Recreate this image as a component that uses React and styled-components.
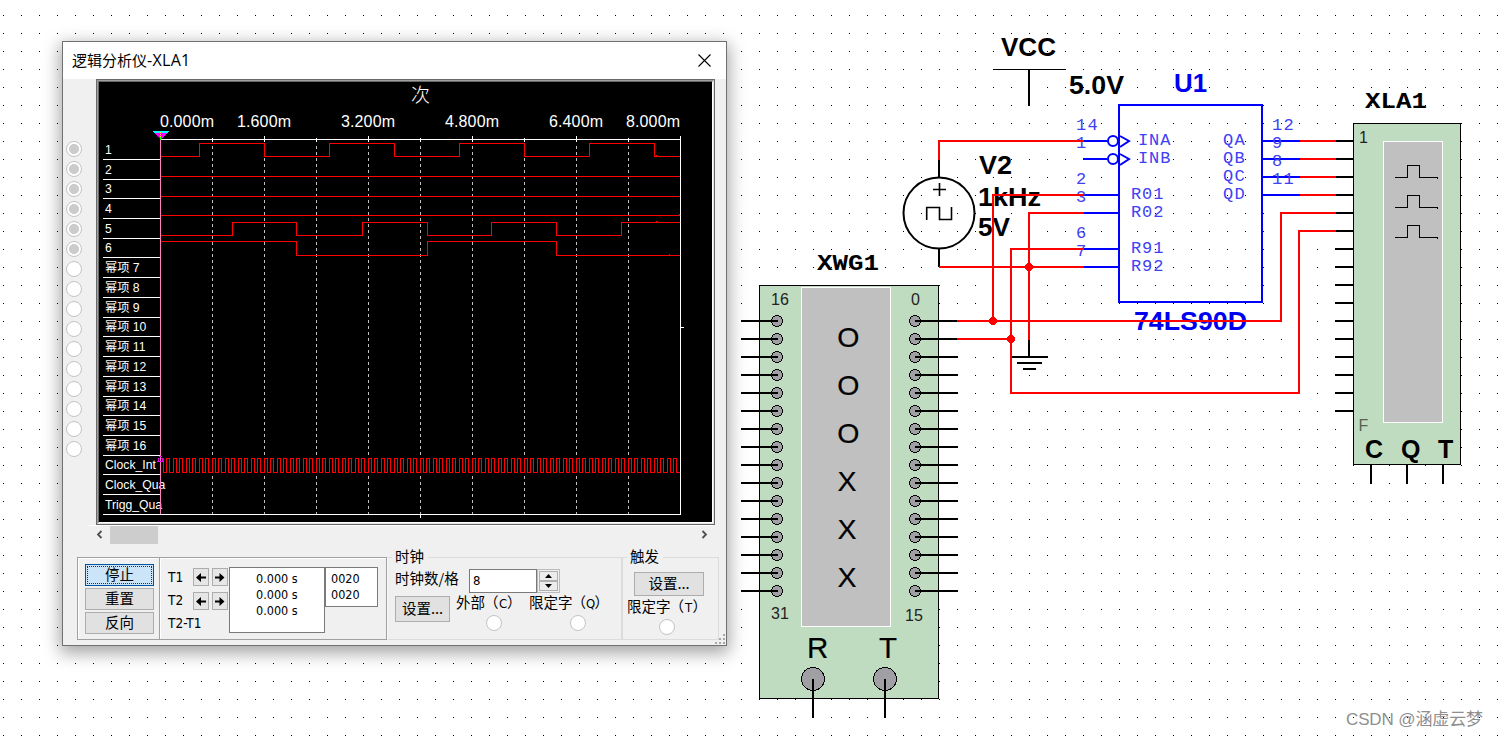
import styled, { createGlobalStyle } from "styled-components";

const GlobalStyle = createGlobalStyle`
  body {
    margin: 0;
    overflow: hidden;
    background-color: #fff;
  }
`;

const uiFont = `"DejaVu Sans Condensed", "Noto Sans", "Noto Sans CJK SC", sans-serif`;
const cjkFont = `"Noto Sans CJK SC", sans-serif`;

const Page = styled.div`
  position: relative;
  width: 1499px;
  height: 737px;
  overflow: hidden;
  background-color: #fff;
  font-family: ${cjkFont};
`;

const Schematic = styled.svg`
  display: block;
  width: 1499px;
  height: 737px;
`;

const Label = styled.text`
  font-family: "Liberation Sans", Arial, sans-serif;
  font-size: ${(p) => p.$size || 25}px;
  font-weight: ${(p) => (p.$thin ? 400 : 700)};
  fill: ${(p) => p.$color || "#000"};
  stroke: ${(p) => (p.$heavy ? "#000" : "none")};
  stroke-width: 0.2px;
`;

const SlabLabel = styled.text`
  font-family: "Liberation Mono", "Courier New", monospace;
  font-size: 22px;
  font-weight: 700;
`;

const PinLabel = styled.text`
  font-family: "Liberation Mono", "Courier New", monospace;
  font-size: 17px;
  fill: #4040f4;
`;

const Watermark = styled.text`
  font-family: "Liberation Sans", "Noto Sans CJK SC", sans-serif;
  font-size: 17px;
  fill: #8f8f8f;
`;

// the analyzer floats over the schematic
const Window = styled.div`
  position: absolute;
  left: 62px;
  top: 41px;
  box-sizing: border-box;
  width: 665px;
  height: 605px;
  border: 1px solid #707070;
  background-color: #f0f0f0;
  box-shadow: 0 5px 16px 2px rgba(0, 0, 0, 0.36);
`;

const TitleBar = styled.div`
  display: flex;
  align-items: center;
  justify-content: space-between;
  height: 37px;
  padding: 0 15px 0 9px;
  background-color: #fff;
`;

const Title = styled.div`
  margin-top: -2px;
  font-family: "Open Sans", "Noto Sans CJK SC", sans-serif;
  font-size: 15px;
  line-height: 20px;
  white-space: nowrap;
  color: #000;
`;

const TitleLatin = styled.span`
  font-size: 16px;
  letter-spacing: 0.3px;
`;

const Upper = styled.div`
  display: flex;
`;

const RadioColumn = styled.div`
  display: flex;
  flex-direction: column;
  gap: 4px;
  width: 30px;
  padding: 62px 0 0 3px;
`;

const Radio = styled.span`
  display: block;
  box-sizing: border-box;
  width: 16px;
  height: 16px;
  border: 1px solid #c3c3c3;
  border-radius: 50%;
  background-color: #fff;
  background-image: ${(p) =>
    p.$on ? "radial-gradient(circle, #ccc 4.7px, #fff 5.3px)" : "none"};
`;

const Frame = styled.div`
  box-sizing: border-box;
  width: 619px;
  height: 446px;
  border: 1px solid #696969;
`;

const FrameBevel = styled.div`
  border: 1px solid;
  border-color: #a0a0a0 #e3e3e3 #e3e3e3 #a0a0a0;
`;

const FrameInner = styled.div`
  border: 1px solid;
  border-color: #696969 #fff #fff #696969;
`;

const Chart = styled.svg`
  display: block;
  overflow: visible;
  width: 613px;
  height: 440px;
  background-color: #000;
`;

const AxisLabel = styled.text`
  font-family: "Liberation Sans", Arial, sans-serif;
  font-size: 16px;
  fill: #fff;
`;

const ChartTitle = styled.text`
  font-family: ${cjkFont};
  font-size: 19px;
  font-weight: 300;
  fill: #fff;
`;

const RowLabel = styled.text`
  font-family: "Liberation Sans", "Noto Sans CJK SC", sans-serif;
  font-size: 12.2px;
  fill: #fff;
`;

const ScrollBar = styled.div`
  display: flex;
  align-items: flex-start;
  box-sizing: border-box;
  width: 624px;
  height: 20px;
  margin-left: 26px;
  border-top: 1px solid #fff;
`;

const ScrollArrow = styled.svg`
  flex-shrink: 0;
  width: 7px;
  height: 9px;
  margin: 4px 7px 0 7px;
`;

const ScrollThumb = styled.div`
  flex-shrink: 0;
  width: 48px;
  height: 18px;
  margin-right: 536px;
  background-color: #cdcdcd;
`;

const Bottom = styled.div`
  display: flex;
  height: 83px;
  margin: 12px 0 0 14px;
`;

const Panel = styled.div`
  box-sizing: border-box;
  width: ${(p) => p.$width}px;
  height: 83px;
  border: 1px solid #a0a0a0;
  border-right-width: ${(p) => (p.$joined ? 0 : 1)}px;
  box-shadow: inset 1px 1px 0 #fff;
`;

const ButtonPanel = styled(Panel)`
  display: flex;
  flex-direction: column;
  gap: 2px;
  padding: 6px 0 0 7px;
`;

const CursorPanel = styled(Panel)`
  display: flex;
  padding: 9px 0 0 8px;
`;

const Button = styled.button`
  box-sizing: border-box;
  width: ${(p) => p.$width || 69}px;
  height: ${(p) => p.$height || 22}px;
  margin: ${(p) => p.$margin || 0};
  padding: 0 0 ${(p) => p.$drop || 3}px;
  border: 1px solid ${(p) => (p.$active ? "#0054a0" : "#adadad")};
  outline: ${(p) => (p.$active ? "1px dotted #402820" : "none")};
  outline-offset: -3px;
  background-color: ${(p) => (p.$active ? "#cce4f7" : "#e1e1e1")};
  font-family: ${cjkFont};
  font-size: 14.5px;
  line-height: 16px;
  color: #000;
`;

const CursorNames = styled.div`
  width: 25px;
  margin-top: -1px;
  font-family: ${uiFont};
  font-size: 13.5px;
  line-height: 23px;
  white-space: nowrap;
`;

const ArrowGrid = styled.div`
  display: grid;
  grid-template-columns: 16px 16px;
  grid-auto-rows: 18px;
  gap: 6px 3px;
  width: 36px;
  padding-top: 1px;
`;

const ArrowButton = styled.div`
  display: flex;
  align-items: center;
  justify-content: center;
  box-sizing: border-box;
  border: 1px solid #adadad;
  background-color: #e6e6e6;
`;

const Readout = styled.div`
  box-sizing: border-box;
  width: ${(p) => p.$width}px;
  height: ${(p) => p.$height}px;
  padding: ${(p) => p.$padding};
  border: 1px solid #7a7a7a;
  background-color: #fff;
  font-family: ${uiFont};
  font-size: 12.5px;
  line-height: 16px;
  white-space: pre-line;
`;

const Group = styled.div`
  box-sizing: border-box;
  width: ${(p) => p.$width}px;
  height: 83px;
  padding-left: ${(p) => p.$indent}px;
  border: 1px solid #dcdcdc;
  border-left-color: ${(p) => (p.$openLeft ? "#f8f8f8" : "#dcdcdc")};
`;

const Legend = styled.div`
  width: 30px;
  height: 17px;
  margin: -10px 0 0 ${(p) => p.$shift || 0}px;
  padding-right: 3px;
  box-shadow: -3px 0 0 #f0f0f0;
  background-color: #f0f0f0;
  font-size: 14.5px;
  line-height: 15px;
  white-space: nowrap;
`;

const Row = styled.div`
  display: flex;
  align-items: flex-start;
  height: ${(p) => p.$height}px;
  margin-top: ${(p) => p.$top || 0}px;
`;

const FieldName = styled.div`
  width: 74px;
  font-size: 14.5px;
  line-height: 18px;
  white-space: nowrap;
`;

const Field = styled.div`
  box-sizing: border-box;
  width: 68px;
  height: 24px;
  padding-left: 3px;
  border: 1px solid #7a7a7a;
  background-color: #fff;
  font-family: ${uiFont};
  font-size: 13px;
  line-height: 22px;
`;

const Spinner = styled.div`
  display: flex;
  flex-direction: column;
  box-sizing: border-box;
  width: 23px;
  height: 24px;
  padding: 1px;
  border: 1px solid #bbb;
`;

const SpinButton = styled.div`
  display: flex;
  flex: 1;
  align-items: center;
  justify-content: center;
  border: 1px solid #b0b0b0;
  background-color: #ececec;
`;

const Option = styled.div`
  display: flex;
  flex-direction: column;
  gap: 4px;
  width: ${(p) => p.$width}px;
  margin: ${(p) => p.$margin};
  padding-top: 1px;
`;

const OptionName = styled.div`
  height: 17px;
  font-family: ${cjkFont};
  font-size: 14.5px;
  line-height: 15px;
  white-space: nowrap;
`;

const Latin = styled.span`
  display: inline-block;
  width: 10px;
  font-family: ${uiFont};
  font-size: 13px;
  text-align: center;
`;

const Paren = styled.span`
  display: inline-block;
  width: ${(p) => (p.$close ? 9 : 14)}px;
  margin-left: -1px;
`;

const OptionRadio = styled(Radio)`
  margin-left: ${(p) => p.$left}px;
`;

const Grip = styled.svg`
  position: absolute;
  right: 0;
  bottom: 0;
  width: 12px;
  height: 12px;
`;

const pins = Array.from({ length: 16 }, (_, i) => i);

const axis = [
  [160, "0.000m"],
  [237, "1.600m"],
  [341, "3.200m"],
  [445, "4.800m"],
  [549, "6.400m"],
  [626, "8.000m"],
];

const rowNames = [
  "1", "2", "3", "4", "5", "6",
  "幂项 7", "幂项 8", "幂项 9", "幂项 10", "幂项 11", "幂项 12",
  "幂项 13", "幂项 14", "幂项 15", "幂项 16",
  "Clock_Int", "Clock_Qua", "Trigg_Qua",
];

const signals = [
  "M161 156.5H199.5V143.5H264.5V156.5H329.5V143.5H394.5V156.5H459.5V143.5H524.5V156.5H589.5V143.5H654.5V156.5H680",
  "M161 176.5H680",
  "M161 196.5H680",
  "M161 215.5H680",
  "M161 235.5H232.5V222.5H296.5V235.5H362.5V222.5H427.5V235.5H491.5V222.5H556.5V235.5H621.5V222.5H680",
  "M161 241.5H296.5V255.5H427.5V241.5H556.5V255.5H680",
];

// 80 internal clock periods over the whole sweep
const clockPath = () => {
  let d = "M160.5 458.5";
  for (let i = 0; i < 80; i++) {
    const fall = Math.floor(160 + i * 6.5 + 3.25) + 0.5;
    const rise = Math.floor(160 + (i + 1) * 6.5) + 0.5;
    d += `H${fall}V472.5H${Math.min(rise, 679.5)}`;
    if (i < 79) d += "V458.5";
  }
  return d;
};

function Waveforms() {
  return (
    <Chart viewBox="99 82 613 440" shapeRendering="crispEdges">
      <ChartTitle x="411" y="102">次</ChartTitle>
      {axis.map(([x, name]) => (
        <AxisLabel key={name} x={x} y="127" textLength="54">{name}</AxisLabel>
      ))}
      {[1, 2, 3, 4, 5, 6, 7, 8, 9].map((i) => {
        const x = 160.5 + i * 52;
        return (
          <g key={i}>
            <path d={`M${x} 146V514`} stroke="#c0c0c0" strokeDasharray="3 3" />
            <path d={`M${x} ${i % 2 ? 138 : 136}V142`} stroke="#fff" />
          </g>
        );
      })}
      <path d="M160 139.5H681M680.5 136V515M103 514.5H681M420.5 514V518M681 327.5H684" stroke="#fff" />
      {rowNames.map((name, i) => {
        const y = Math.round(158.8 + i * 19.73);
        return (
          <g key={name}>
            <path d={`M103 ${y + 0.5}H160`} stroke="#fff" />
            <RowLabel x="105" y={y - 5}>{name}</RowLabel>
          </g>
        );
      })}
      {signals.map((d) => (
        <path key={d} d={d} fill="none" stroke="#f00" />
      ))}
      <path d={clockPath()} fill="none" stroke="#f00" />
      <path d="M656.5 155V156M656.5 221V222M669.5 254V255M679.5 214V215" stroke="#f00" />
      <path d="M160.5 139V514" stroke="#ff80c0" />
      <path d="M152 131H169L167 133H154Z" fill="#0ff" />
      <path d="M154 133H167L161 139H160Z" fill="#f0f" />
      <path d="M160.5 132V138" stroke="#ff0" strokeDasharray="1 1" />
      <rect x="160" y="137" width="1" height="3" fill="#0f0" />
      <path d="M158.5 457.5V460.5M157 461.5H164M162.5 457.5V460.5M159 456.5H162" stroke="#e0e" />
    </Chart>
  );
}

function Circuit() {
  return (
    <Schematic viewBox="0 0 1499 737" shapeRendering="crispEdges">
      <defs>
        <pattern id="dots" x="3" y="15" width="18" height="18" patternUnits="userSpaceOnUse">
          <rect width="1" height="1" fill="#000" />
        </pattern>
      </defs>
      <rect width="1499" height="737" fill="url(#dots)" />

      {/* VCC */}
      <Label x="1001" y="56" textLength="55" lengthAdjust="spacingAndGlyphs">VCC</Label>
      <Label x="1069" y="94" textLength="55" lengthAdjust="spacingAndGlyphs">5.0V</Label>
      <path d="M993 69.5H1066" stroke="#000" />
      <path d="M1029 70V106" stroke="#000" strokeWidth="2" />

      {/* clock source */}
      <Label x="979" y="174" textLength="33" lengthAdjust="spacingAndGlyphs">V2</Label>
      <Label x="978" y="206" textLength="63" lengthAdjust="spacingAndGlyphs">1kHz</Label>
      <Label x="978" y="236" textLength="32" lengthAdjust="spacingAndGlyphs">5V</Label>
      <circle cx="939" cy="213" r="35.5" fill="none" stroke="#000" strokeWidth="2" shapeRendering="auto" />
      <path d="M939 159V177M939 249V267" stroke="#000" strokeWidth="2" />
      <path
        d="M933 189.5H946M939.5 183V196M926.7 220V207.5H939.5V219.5H951.5V207"
        fill="none"
        stroke="#000"
        strokeWidth="1.6"
        shapeRendering="auto"
      />

      {/* counter */}
      <Label x="1174" y="92" $color="#0000f0" textLength="33" lengthAdjust="spacingAndGlyphs">U1</Label>
      <Label x="1134" y="330" $color="#0000f0" textLength="113" lengthAdjust="spacingAndGlyphs">74LS90D</Label>
      <g fill="none" stroke="#00f" strokeWidth="2">
        <rect x="1119" y="105" width="143" height="197" />
        <path d="M1084 141H1107M1083 159H1107M1084 195H1119M1084 213H1119M1084 249H1119M1084 267H1119" />
        <path d="M1263 141H1300M1263 159H1300M1263 177H1300M1263 195H1300" />
        <g shapeRendering="auto">
          <circle cx="1113" cy="141" r="5" />
          <circle cx="1113" cy="159" r="5" />
          <path d="M1120 136L1129 141L1120 147M1120 154L1129 159L1120 165" />
        </g>
      </g>
      {[
        ["14", 1076, 130], ["1", 1076, 148], ["2", 1076, 184], ["3", 1076, 202],
        ["6", 1076, 238], ["7", 1076, 256], ["12", 1272, 130], ["9", 1272, 148],
        ["8", 1272, 166], ["11", 1272, 184], ["INA", 1138, 145], ["INB", 1138, 163],
        ["R01", 1131, 199], ["R02", 1131, 217], ["R91", 1131, 253], ["R92", 1131, 271],
        ["QA", 1223, 145], ["QB", 1223, 163], ["QC", 1223, 181], ["QD", 1223, 199],
      ].map(([name, x, y]) => (
        <PinLabel key={name} x={x} y={y} textLength={name.length * 10.8}>{name}</PinLabel>
      ))}

      {/* word generator */}
      <SlabLabel x="817" y="270" textLength="62" lengthAdjust="spacingAndGlyphs">XWG1</SlabLabel>
      <rect x="759.5" y="285.5" width="179" height="413" fill="#c0dcc0" stroke="#000" />
      <rect x="801.5" y="287.5" width="89" height="339" fill="#c0c0c0" stroke="#fff" />
      <Label $thin $size={16} x="771" y="305" $color="#222">16</Label>
      <Label $thin $size={16} x="911" y="305" $color="#222">0</Label>
      <Label $thin $size={16} x="771" y="619" $color="#222">31</Label>
      <Label $thin $size={16} x="905" y="621" $color="#222">15</Label>
      {["O", "O", "O", "X", "X", "X"].map((bit, i) => (
        <Label key={i} $thin $heavy $size={28.5} x={bit === "O" ? 837.3 : 837.5} y={347 + i * 48}>{bit}</Label>
      ))}
      <Label $thin $heavy $size={29.5} x="807" y="658">R</Label>
      <Label $thin $heavy $size={29.5} x="879" y="658">T</Label>
      {pins.map((i) => {
        const y = 321 + i * 18;
        return (
          <g key={i}>
            <circle cx="777" cy={y} r="5.5" fill="#a0a0a4" stroke="#000" />
            <circle cx="915" cy={y} r="5.5" fill="#a0a0a4" stroke="#000" />
            <path d={`M741 ${y}H778M915 ${y}H958`} stroke="#000" strokeWidth="2" />
          </g>
        );
      })}
      <circle cx="813" cy="679" r="11.5" fill="#a0a0a4" stroke="#000" />
      <circle cx="885" cy="679" r="11.5" fill="#a0a0a4" stroke="#000" />
      <path d="M813 679V718M885 679V718" stroke="#000" strokeWidth="2" />

      {/* logic analyzer */}
      <SlabLabel x="1365" y="108" textLength="62" lengthAdjust="spacingAndGlyphs">XLA1</SlabLabel>
      <rect x="1353.5" y="123.5" width="107" height="341" fill="#c0dcc0" stroke="#000" />
      <rect x="1383.5" y="141.5" width="59" height="281" fill="#c0c0c0" stroke="#fff" />
      {[177, 207, 237].map((y) => (
        <path key={y} d={`M1395 ${y + 0.5}H1407.5V${y - 11.5}H1419.5V${y + 0.5}H1437.5V${y + 2}`} fill="none" stroke="#000" />
      ))}
      {pins.map((i) => (
        <path key={i} d={`M1335 ${141 + i * 18}H1353`} stroke="#000" strokeWidth="2" />
      ))}
      <path d="M1371 465V484M1407 465V484M1443 465V484" stroke="#000" strokeWidth="2" />
      <Label $thin $size={16} x="1359" y="143" $color="#222">1</Label>
      <Label $thin $size={16} x="1358.5" y="431" $color="#566456">F</Label>
      <Label x="1365" y="458">C</Label>
      <Label x="1401" y="458">Q</Label>
      <Label x="1438" y="458">T</Label>

      {/* ground */}
      <path d="M1029 339V357M1011 357H1048M1017 363H1042M1023 369H1036" stroke="#000" strokeWidth="2" />

      {/* nets */}
      <g fill="none" stroke="#f00" strokeWidth="2">
        <path d="M939 160V141H1084" />
        <path d="M939 267H1084" />
        <path d="M1084 195H993V321" />
        <path d="M1084 213H1029V340" />
        <path d="M1084 249H1011V393H1299V231H1336" />
        <path d="M957 321H1281V213H1336" />
        <path d="M957 339H1011" />
        <path d="M1300 141H1336M1300 159H1336M1300 177H1336M1300 195H1336" />
      </g>
      <g fill="#f00">
        <circle cx="1029" cy="267" r="4" />
        <circle cx="993" cy="321" r="4" />
        <circle cx="1011" cy="339" r="4" />
      </g>

      <Watermark x="1346" y="725" textLength="137">CSDN @涵虚云梦</Watermark>
    </Schematic>
  );
}

function Arrow({ right }) {
  return (
    <svg width="10" height="9" viewBox="0 0 10 9">
      <path
        d={right ? "M0 3.5H4.5V0L9.5 4.5L4.5 9V5.5H0Z" : "M10 3.5H5V0L0 4.5L5 9V5.5H10Z"}
        fill="#000"
      />
    </svg>
  );
}

function Analyzer() {
  return (
    <Window>
      <TitleBar>
        <Title>逻辑分析仪<TitleLatin>-XLA1</TitleLatin></Title>
        <svg width="13" height="13" viewBox="0 0 13 13">
          <path d="M0.5 0.5L12.5 12.5M12.5 0.5L0.5 12.5" stroke="#000" strokeWidth="1.1" />
        </svg>
      </TitleBar>
      <Upper>
        <RadioColumn>
          {pins.map((i) => (
            <Radio key={i} $on={i < 6} />
          ))}
        </RadioColumn>
        <Frame>
          <FrameBevel>
            <FrameInner>
              <Waveforms />
            </FrameInner>
          </FrameBevel>
        </Frame>
      </Upper>
      <ScrollBar>
        <ScrollArrow viewBox="0 0 7 9">
          <path d="M5.5 1L2 4.5L5.5 8" fill="none" stroke="#505050" strokeWidth="1.8" />
        </ScrollArrow>
        <ScrollThumb />
        <ScrollArrow viewBox="0 0 7 9">
          <path d="M1.5 1L5 4.5L1.5 8" fill="none" stroke="#505050" strokeWidth="1.8" />
        </ScrollArrow>
      </ScrollBar>
      <Bottom>
        <ButtonPanel $width={82} $joined>
          <Button $active>停止</Button>
          <Button>重置</Button>
          <Button>反向</Button>
        </ButtonPanel>
        <CursorPanel $width={228}>
          <CursorNames>
            <div>T1</div>
            <div>T2</div>
            <div>T2-T1</div>
          </CursorNames>
          <ArrowGrid>
            <ArrowButton><Arrow /></ArrowButton>
            <ArrowButton><Arrow right /></ArrowButton>
            <ArrowButton><Arrow /></ArrowButton>
            <ArrowButton><Arrow right /></ArrowButton>
          </ArrowGrid>
          <Readout $width={96} $height={66} $padding="3px 0 0 26px">
            {"0.000 s\n0.000 s\n0.000 s"}
          </Readout>
          <Readout $width={53} $height={40} $padding="3px 0 0 5px">
            {"0020\n0020"}
          </Readout>
        </CursorPanel>
        <Group $width={235} $indent={7} $openLeft>
          <Legend>时钟</Legend>
          <Row $top={4} $height={24}>
            <FieldName>时钟数/格</FieldName>
            <Field>8</Field>
            <Spinner>
              <SpinButton>
                <svg width="7" height="4"><path d="M0 4L3.5 0L7 4Z" /></svg>
              </SpinButton>
              <SpinButton>
                <svg width="7" height="4"><path d="M0 0L3.5 4L7 0Z" /></svg>
              </SpinButton>
            </Spinner>
          </Row>
          <Row $height={44}>
            <Button $width={55} $height={26} $margin="3px 6px 0 0">设置...</Button>
            <Option $width={73}>
              <OptionName>外部<Paren>（</Paren><Latin>C</Latin><Paren $close>）</Paren></OptionName>
              <OptionRadio $left={30} />
            </Option>
            <Option $width={80}>
              <OptionName>限定字<Paren>（</Paren><Latin>Q</Latin><Paren $close>）</Paren></OptionName>
              <OptionRadio $left={41} />
            </Option>
          </Row>
        </Group>
        <Group $width={97} $indent={4}>
          <Legend $shift={3}>触发</Legend>
          <Button $width={70} $height={24} $margin="7px 0 0 7px">设置...</Button>
          <Option $width={90} $margin="1px 0 0 0">
            <OptionName>限定字<Paren>（</Paren><Latin>T</Latin><Paren $close>）</Paren></OptionName>
            <OptionRadio $left={32} />
          </Option>
        </Group>
      </Bottom>
      <Grip viewBox="0 0 12 12">
        <path d="M9 1h2v2h-2zM5 5h2v2h-2zM9 5h2v2h-2zM1 9h2v2h-2zM5 9h2v2h-2zM9 9h2v2h-2z" fill="#a8a8a8" />
      </Grip>
    </Window>
  );
}

export default function App() {
  return (
    <Page>
      <GlobalStyle />
      <Circuit />
      <Analyzer />
    </Page>
  );
}
